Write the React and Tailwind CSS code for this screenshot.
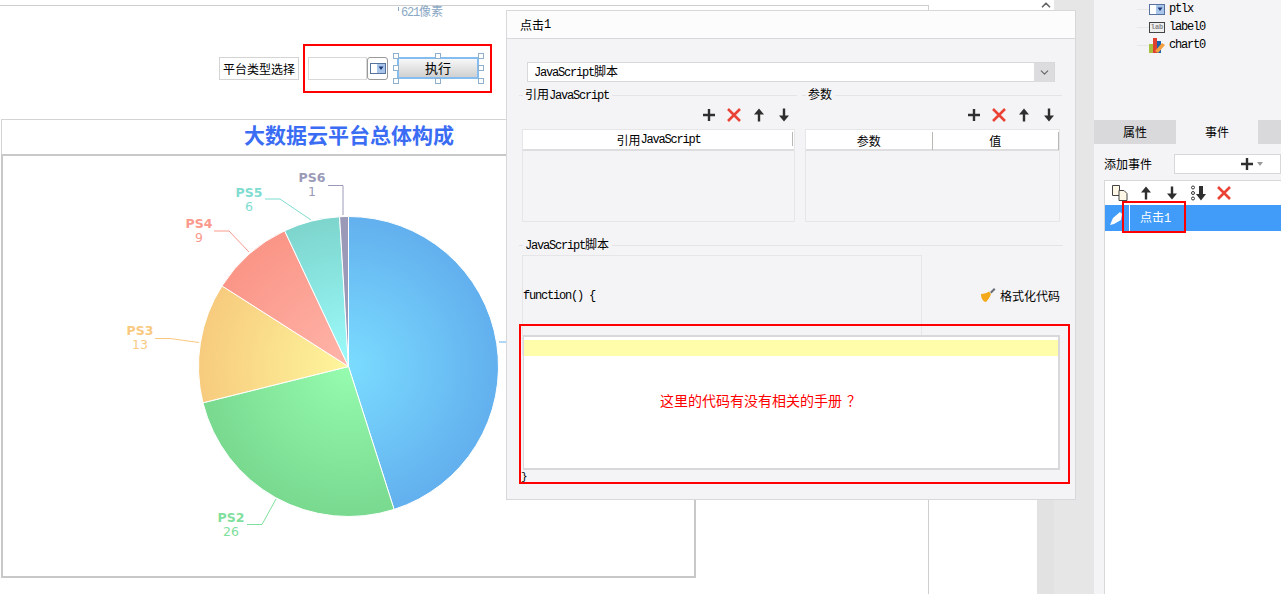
import React from 'react';
import { ChevronDown, ChevronUp } from 'lucide-react';

const SIM = { fontFamily: '"Noto Sans CJK SC", "Liberation Serif", serif' };
const MONO = { fontFamily: '"Liberation Mono", "Noto Sans CJK SC", monospace' };

const cx = 348.5;
const cy = 366.5;
const r = 150;

const slices = [
  { from: 0, to: 162.3, color: 'url(#g1)' },
  { from: 162.3, to: 256, color: 'url(#g2)' },
  { from: 256, to: 302.5, color: 'url(#g3)' },
  { from: 302.5, to: 334.8, color: 'url(#g4)' },
  { from: 334.8, to: 356.6, color: 'url(#g5)' },
  { from: 356.6, to: 360, color: '#9a9ab8' },
];

const labels = [
  { name: 'PS2', value: '26', x: 231, y: 523, color: '#7fdf9c', line: 'M247 524.5H262L276 499' },
  { name: 'PS3', value: '13', x: 140, y: 336, color: '#f9c97f', line: 'M155 338.5H170L199 342.5' },
  { name: 'PS4', value: '9', x: 199, y: 229, color: '#fb9a8c', line: 'M214 231H229L249 252' },
  { name: 'PS5', value: '6', x: 249, y: 198, color: '#7fdcd0', line: 'M265 199H280L311 220' },
  { name: 'PS6', value: '1', x: 312, y: 183, color: '#9a9ab8', line: 'M328 185.5H343V215' },
];

const point = (deg) => {
  const a = ((deg - 90) * Math.PI) / 180;
  return [cx + r * Math.cos(a), cy + r * Math.sin(a)];
};

const slicePath = ({ from, to }) => {
  const [x1, y1] = point(from);
  const [x2, y2] = point(to);
  return `M${cx} ${cy}L${x1} ${y1}A${r} ${r} 0 ${to - from > 180 ? 1 : 0} 1 ${x2} ${y2}Z`;
};

const PieChart = () => (
  <svg width="695" height="420" viewBox="0 156 695 420" className="block">
    <defs>
      <radialGradient id="g1" gradientUnits="userSpaceOnUse" cx={cx} cy={cy} r={r}>
        <stop offset="0" stopColor="#7bdcff" />
        <stop offset="1" stopColor="#62b0ee" />
      </radialGradient>
      <radialGradient id="g2" gradientUnits="userSpaceOnUse" cx={cx} cy={cy} r={r}>
        <stop offset="0" stopColor="#96fcaf" />
        <stop offset="1" stopColor="#78d98f" />
      </radialGradient>
      <radialGradient id="g3" gradientUnits="userSpaceOnUse" cx={cx} cy={cy} r={r}>
        <stop offset="0" stopColor="#fef69c" />
        <stop offset="1" stopColor="#f7cb7e" />
      </radialGradient>
      <radialGradient id="g4" gradientUnits="userSpaceOnUse" cx={cx} cy={cy} r={r}>
        <stop offset="0" stopColor="#ffb5a9" />
        <stop offset="1" stopColor="#fa9587" />
      </radialGradient>
      <radialGradient id="g5" gradientUnits="userSpaceOnUse" cx={cx} cy={cy} r={r}>
        <stop offset="0" stopColor="#9cfcfc" />
        <stop offset="1" stopColor="#7dd5cd" />
      </radialGradient>
    </defs>
    {slices.map((s) => (
      <path key={s.from} d={slicePath(s)} fill={s.color} stroke="#fff" strokeWidth="1" />
    ))}
    {labels.map((l) => (
      <g key={l.name} fill={l.color} textAnchor="middle" fontFamily="'DejaVu Sans', sans-serif">
        <path d={l.line} fill="none" stroke={l.color} />
        <text x={l.x} y={l.y - 1} fontSize="12.5" fontWeight="700">{l.name}</text>
        <text x={l.x} y={l.y + 13} fontSize="12.5">{l.value}</text>
      </g>
    ))}
    <path d="M499 342H506" stroke="#62b0ee" />
  </svg>
);

const Handle = ({ className }) => (
  <span className={`absolute w-[6px] h-[6px] bg-white border border-[#8fb0cc] ${className}`} />
);

const ComboIcon = () => (
  <svg width="16" height="11" viewBox="0 0 16 11" className="block">
    <rect x="0.5" y="0.5" width="15" height="10" fill="#fff" stroke="#56729f" />
    <rect x="7" y="1" width="8" height="9" fill="#a9c6ea" />
    <path d="M8.5 3.5h5L11 7z" fill="#1e3a78" />
  </svg>
);

const PlusIcon = () => (
  <svg width="18" height="18" viewBox="0 0 18 18" className="block" stroke="#2f2f2f" strokeWidth="2.4">
    <path d="M3 9H15M9 3V15" />
  </svg>
);

const CrossIcon = () => (
  <svg width="18" height="18" viewBox="0 0 18 18" className="block" stroke="#ea4335" strokeWidth="2.6">
    <path d="M3 3L15 15M15 3L3 15" />
  </svg>
);

const UpIcon = () => (
  <svg width="18" height="18" viewBox="0 0 18 18" className="block" fill="#2f2f2f">
    <path d="M9 2.500L14 8.500H10.200V15.500H7.800V8.500H4Z" />
  </svg>
);

const DownIcon = () => (
  <svg width="18" height="18" viewBox="0 0 18 18" className="block" fill="#2f2f2f">
    <path d="M9 15.500L14 9.500H10.200V2.500H7.800V9.500H4Z" />
  </svg>
);

const ToolRow = ({ className = '' }) => (
  <div className={`flex items-center gap-[7px] ${className}`}>
    <PlusIcon />
    <CrossIcon />
    <UpIcon />
    <DownIcon />
  </div>
);

const SectionTitle = ({ children, className = '' }) => (
  <div className={`flex items-center h-[14px] text-[12px] tracking-[-1.2px] text-black ${className}`}>
    <span className="w-[4px] h-px bg-[#e4e4e8]" />
    <span className="whitespace-nowrap pl-[2px] pr-[3px]" style={MONO}>{children}</span>
    <span className="flex-1 h-px bg-[#e4e4e8]" />
  </div>
);

const Cjk = ({ children }) => <span className="text-[12px] tracking-normal" style={SIM}>{children}</span>;

const Canvas = () => (
  <div className="absolute inset-0 bg-white">
    <div className="absolute left-0 top-[5px] w-[929px] h-px bg-[#cfcfcf]" />
    <div className="absolute left-[928px] top-[5px] w-px h-[589px] bg-[#cfcfcf]" />
    <div className="absolute left-[398px] top-[7px] w-px h-[4px] bg-[#8aa8c4]" />
    <span className="absolute left-[401px] top-[3px] text-[12px] tracking-[-1.2px] leading-[16px] text-[#8aa8c4]" style={MONO}>
      621<Cjk>像素</Cjk>
    </span>

    <div className="absolute left-[219px] top-[57px] w-[80px] h-[23px] border border-[#d4d4d4] flex items-center justify-center text-[12px] text-black" style={SIM}>
      平台类型选择
    </div>
    <div className="absolute left-[308px] top-[57px] w-[59px] h-[23px] border border-[#d9d9d9] bg-white" />
    <div className="absolute left-[367px] top-[57px] w-[21px] h-[23px] border border-[#9a9a9a] rounded-[3px] flex items-center justify-center">
      <ComboIcon />
    </div>
    <div className="absolute left-[397px] top-[57px] w-[82px] h-[22px] border-2 border-[#86bdf0] bg-gradient-to-b from-[#f8f8f8] to-[#d0d0d0] flex items-center justify-center text-[13px] text-black" style={SIM}>
      执行
    </div>
    <Handle className="left-[393px] top-[53px]" />
    <Handle className="left-[435px] top-[53px]" />
    <Handle className="left-[478px] top-[53px]" />
    <Handle className="left-[393px] top-[65px]" />
    <Handle className="left-[478px] top-[65px]" />
    <Handle className="left-[393px] top-[78px]" />
    <Handle className="left-[435px] top-[78px]" />
    <Handle className="left-[478px] top-[78px]" />
    <div className="absolute left-[303px] top-[44px] w-[189px] h-[49px] border-2 border-[#ff0000]" />

    <div className="absolute left-[1px] top-[119px] w-[506px] h-[36px] pb-[6px] border-t border-l border-[#d4d4d4] flex items-center justify-center font-bold text-[21px] text-[#3a6cf4]" style={SIM}>
      <span className="ml-[189px]">大数据云平台总体构成</span>
    </div>
    <div className="absolute left-[1px] top-[154px] w-[695px] h-[424px] border-2 border-[#c8c8c8] overflow-hidden">
      <div className="-ml-[3px]">
        <PieChart />
      </div>
    </div>
  </div>
);

const Dialog = () => (
  <div className="absolute left-[506px] top-[10px] w-[570px] h-[490px] bg-[#f4f4f6] border border-[#d8d8da]">
    <div className="h-[28px] bg-[#fcfcfc] border-b border-[#d8d8da] pl-[13px] flex items-center text-[12px] text-black" style={MONO}>
      <Cjk>点击</Cjk>1
    </div>
    <div className="ml-[20px] mt-[23px] w-[528px] h-[20px] bg-white border border-[#d8d8da] flex items-center justify-between">
      <span className="pl-[6px] text-[12px] tracking-[-1.2px] text-black" style={MONO}>JavaScript<Cjk>脚本</Cjk></span>
      <span className="w-[20px] h-[19px] bg-[#dcdcde] flex items-center justify-center">
        <ChevronDown size={13} className="text-[#666]" />
      </span>
    </div>
    <div className="flex gap-[5px] ml-[12px] mt-[6px]">
      <div className="w-[278px]">
        <SectionTitle><Cjk>引用</Cjk>JavaScript</SectionTitle>
        <ToolRow className="justify-end pr-[4px] mt-[4px]" />
        <div className="mt-[5px] ml-[3px] w-[273px] h-[93px] border border-[#e6e6e8]">
          <div className="h-[21px] bg-white border-b-2 border-[#dedee0] flex items-center justify-center text-[12px] tracking-[-1.2px] text-black relative" style={MONO}>
            <Cjk>引用</Cjk>JavaScript
            <span className="absolute right-[1px] top-[2px] w-px h-[14px] bg-[#b8b8b4]" />
          </div>
        </div>
      </div>
      <div className="w-[260px]">
        <SectionTitle><Cjk>参数</Cjk></SectionTitle>
        <ToolRow className="justify-end pr-[4px] mt-[4px]" />
        <div className="mt-[5px] ml-[3px] w-[255px] h-[93px] border border-[#e6e6e8]">
          <div className="h-[21px] bg-white border-b-2 border-[#dedee0] grid grid-cols-2 text-[12px] text-black" style={SIM}>
            <span className="flex items-center justify-center border-r border-[#b8b8b4] my-[2px]">参数</span>
            <span className="flex items-center justify-center border-r border-[#b8b8b4] my-[2px]">值</span>
          </div>
        </div>
      </div>
    </div>
    <SectionTitle className="ml-[12px] mt-[16px] w-[544px]">JavaScript<Cjk>脚本</Cjk></SectionTitle>
    <div className="flex mt-[3px] ml-[15px]">
      <div className="w-[400px] h-[100px] border border-[#e6e6e8] pt-[31px] text-[12px] tracking-[-1.2px] text-black" style={MONO}>
        function() &#123;
      </div>
      <div className="flex items-start gap-[4px] ml-[58px] mt-[32px] text-[12px] text-black whitespace-nowrap" style={SIM}>
        <svg width="16" height="16" viewBox="0 0 16 16" className="block">
          <path d="M10 5l4-4 1.500 1.500-4 4z" fill="#6a6e78" />
          <path d="M1 7c3 0 6-1 8-2.500l2 2.500c-1 3-3 6-5 8C3 15 1 11 1 7z" fill="#f3a91a" />
        </svg>
        格式化代码
      </div>
    </div>
  </div>
);

const TreeItem = ({ icon, label }) => (
  <div className="h-[18px] flex items-center text-[12px] tracking-[-1.2px] text-black" style={MONO}>
    <span className="w-[12px] h-px bg-[#e8e8ea]" />
    <span className="w-[16px] flex justify-center tracking-normal">{icon}</span>
    <span className="ml-[4px]">{label}</span>
  </div>
);

const SidePanel = () => (
  <div className="absolute left-[1094px] top-0 bottom-0 w-[187px] bg-[#f4f4f6] flex flex-col">
    <div className="h-[120px] pl-[43px]">
      <TreeItem icon={<ComboIcon />} label="ptlx" />
      <TreeItem
        icon={
          <span className="w-[16px] h-[11px] border border-[#444] bg-[#eee] text-[7px] leading-[9px] text-[#888] text-center font-bold">lab</span>
        }
        label="label0"
      />
      <TreeItem
        icon={
          <svg width="16" height="15" viewBox="0 0 16 15" className="block">
            <rect x="0" y="6" width="4" height="9" fill="#a8c040" />
            <rect x="4" y="0" width="4" height="15" fill="#e04030" />
            <rect x="8" y="3" width="4" height="12" fill="#1a60b0" />
            <path d="M6 13l7-8 3 2-7 8z" fill="#f4a040" />
          </svg>
        }
        label="chart0"
      />
    </div>
    <div className="h-[24px] flex bg-[#d9d9dc] text-[12px] text-black" style={SIM}>
      <span className="w-[82px] flex items-center justify-center">属性</span>
      <span className="w-[82px] bg-[#f4f4f6] flex items-center justify-center">事件</span>
    </div>
    <div className="h-[36px] flex items-center text-[12px] text-black pl-[10px] pt-[3px]" style={SIM}>
      <span className="w-[70px]">添加事件</span>
      <div className="flex-1 h-[20px] bg-white border border-[#d8d8da] flex items-center pl-[63px] gap-[1px]">
        <PlusIcon />
        <span className="w-0 h-0 border-x-[3px] border-x-transparent border-t-[4px] border-t-[#999]" />
      </div>
    </div>
    <div className="ml-[10px] flex-1 bg-white border-l border-t border-[#d8d8da]">
      <div className="h-[24px] flex items-center pl-[7px] gap-[9px]">
        <svg width="16" height="16" viewBox="0 0 16 16" className="block" fill="#fff8e6" stroke="#444">
          <path d="M.5.500h7v10h-7z" />
          <path d="M7 5.500h5l3 3v7H7z" />
        </svg>
        <UpIcon />
        <span className="-ml-[1px]"><DownIcon /></span>
        <span className="flex items-center">
          <svg width="6" height="16" viewBox="0 0 6 16" fill="none" stroke="#333" className="block">
            <circle cx="3" cy="2.500" r="1.500" />
            <circle cx="3" cy="8" r="1.500" />
            <circle cx="3" cy="13.500" r="1.500" />
          </svg>
          <svg width="10" height="16" viewBox="0 0 10 16" className="block" fill="#2f2f2f">
            <path d="M5 15.500L10 9H7V1H3V9H0Z" />
          </svg>
        </span>
        <CrossIcon />
      </div>
      <div className="h-[26px] bg-[#409cf8] flex items-center text-[12px] text-white">
        <svg width="18" height="18" viewBox="0 0 18 18" className="block ml-[4px]">
          <path d="M1 16l3-7 7-6 2 2-1 6-7 4z" fill="#fff" />
        </svg>
        <span className="w-px h-[26px] bg-white ml-[2px]" />
        <span className="pl-[10px]" style={MONO}><Cjk>点击</Cjk>1</span>
      </div>
    </div>
  </div>
);

export default function App() {
  return (
    <div className="relative w-[1281px] h-[594px] overflow-hidden bg-white">
      <Canvas />
      <div className="absolute left-[1037px] top-0 bottom-0 w-[17px] bg-[#e2e2e2]">
        <div className="h-[10px] bg-white flex items-center justify-center">
          <ChevronUp size={14} strokeWidth={3} className="text-[#666]" />
        </div>
      </div>
      <div className="absolute left-[1054px] top-0 bottom-0 w-[40px] bg-[#e6e6e6]" />
      <SidePanel />
      <Dialog />

      {/* notes pasted over the screenshot */}
      <div className="absolute left-[523px] top-[335px] w-[537px] h-[135px] bg-white border-2 border-l border-[#d8d8da]">
        <div className="mt-[3px] h-[16px] bg-[#fffcaa]" />
      </div>
      <span className="absolute left-[660px] top-[391px] text-[14px] leading-[18px] text-[#ff0000] whitespace-nowrap" style={SIM}>
        这里的代码有没有相关的手册<span className="ml-[5px]">？</span>
      </span>
      <span className="absolute left-[521px] top-[470px] text-[11px] leading-[14px] text-black" style={MONO}>&#125;</span>
      <div className="absolute left-[519px] top-[324px] w-[551px] h-[160px] border-2 border-[#ff0000]" />
      <div className="absolute left-[1122px] top-[201px] w-[64px] h-[32px] border-2 border-[#ff0000]" />
    </div>
  );
}
